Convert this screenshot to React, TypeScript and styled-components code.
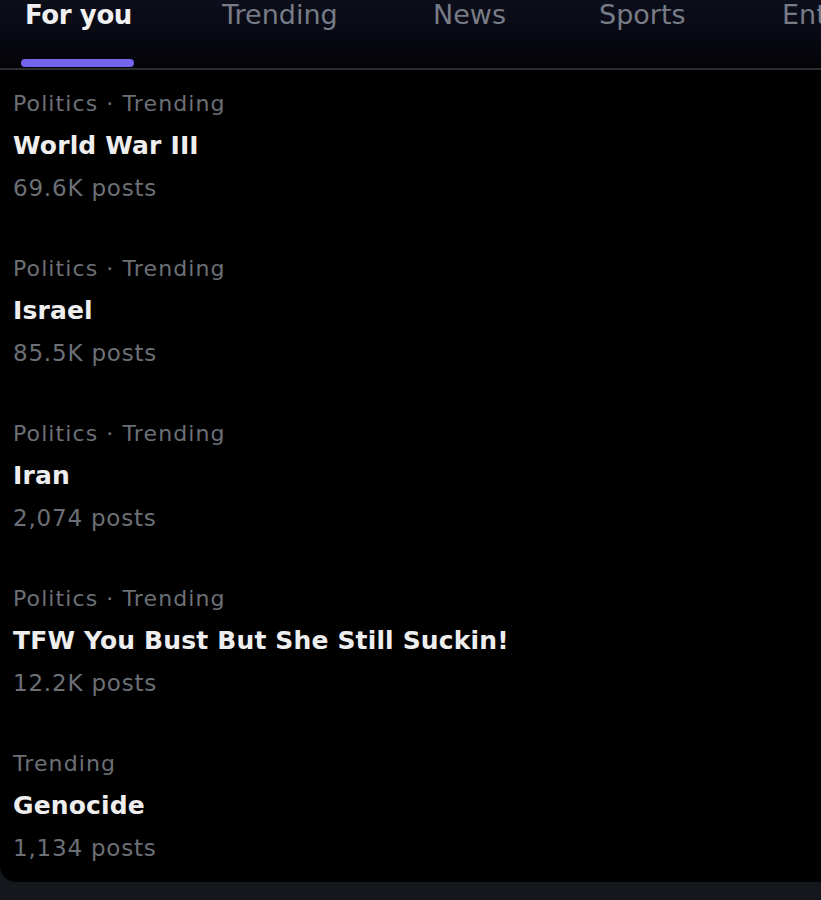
import React from "react";
import styled, { createGlobalStyle } from "styled-components";

const Global = createGlobalStyle`
  html, body { margin: 0; padding: 0; background: #15181d; }
  body { font-family: "DejaVu Sans", "Liberation Sans", sans-serif; -webkit-font-smoothing: antialiased; }
`;

const Page = styled.div`
  width: 821px;
  height: 900px;
  overflow: hidden;
  background: #14171c;
`;

const Panel = styled.div`
  height: 882px;
  background: #000;
  border-bottom-left-radius: 16px;
  display: flex;
  flex-direction: column;
  overflow: hidden;
`;

const TabBar = styled.div`
  flex: 0 0 auto;
  height: 68px;
  display: flex;
  align-items: flex-start;
  background: linear-gradient(180deg, #0c0e1a 0%, #080913 50%, #030306 100%);
  border-bottom: 2px solid #2c2d31;
  white-space: nowrap;
  overflow: hidden;
`;

const Tab = styled.div<{ $active?: boolean; $w: number }>`
  position: relative;
  flex: 0 0 ${(p) => p.$w}px;
  height: 68px;
  box-sizing: border-box;
  padding-left: ${(p) => (p.$active ? 25 : 0)}px;
  font-size: ${(p) => (p.$active ? 26 : 27)}px;
  line-height: 30px;
  font-weight: ${(p) => (p.$active ? 700 : 400)};
  color: ${(p) => (p.$active ? "#f1f1f3" : "#777c86")};
  letter-spacing: ${(p) => (p.$active ? "-0.4px" : "0")};
`;

const Indicator = styled.div`
  position: absolute;
  left: 21px;
  top: 59px;
  width: 113px;
  height: 8px;
  border-radius: 4px;
  background: #7464ee;
`;

const List = styled.div`
  display: flex;
  flex-direction: column;
  padding: 19px 0 0 13px;
`;

const Item = styled.div`
  flex: 0 0 165px;
  display: flex;
  flex-direction: column;
`;

const Meta = styled.div`
  font-size: 22px;
  line-height: 30px;
  color: #6c7076;
  letter-spacing: 1.1px;
`;

const Title = styled.div`
  font-size: 25px;
  line-height: 32px;
  margin-top: 11px;
  font-weight: 700;
  color: #eeeeef;
  letter-spacing: 0.15px;
`;

const Count = styled.div`
  font-size: 23px;
  line-height: 30px;
  margin-top: 11px;
  color: #6c7076;
  letter-spacing: 0.8px;
`;

const tabs = [
  { label: "For you", w: 222, active: true },
  { label: "Trending", w: 211 },
  { label: "News", w: 166 },
  { label: "Sports", w: 183 },
  { label: "Entertainment", w: 300 },
];

const trends = [
  { meta: "Politics · Trending", title: "World War III", count: "69.6K posts" },
  { meta: "Politics · Trending", title: "Israel", count: "85.5K posts" },
  { meta: "Politics · Trending", title: "Iran", count: "2,074 posts" },
  { meta: "Politics · Trending", title: "TFW You Bust But She Still Suckin!", count: "12.2K posts" },
  { meta: "Trending", title: "Genocide", count: "1,134 posts" },
];

export default function App() {
  return (
    <Page>
      <Global />
      <Panel>
        <TabBar>
          {tabs.map((t) => (
            <Tab key={t.label} $active={t.active} $w={t.w}>
              {t.label}
              {t.active && <Indicator />}
            </Tab>
          ))}
        </TabBar>
        <List>
          {trends.map((t) => (
            <Item key={t.title}>
              <Meta>{t.meta}</Meta>
              <Title>{t.title}</Title>
              <Count>{t.count}</Count>
            </Item>
          ))}
        </List>
      </Panel>
    </Page>
  );
}
